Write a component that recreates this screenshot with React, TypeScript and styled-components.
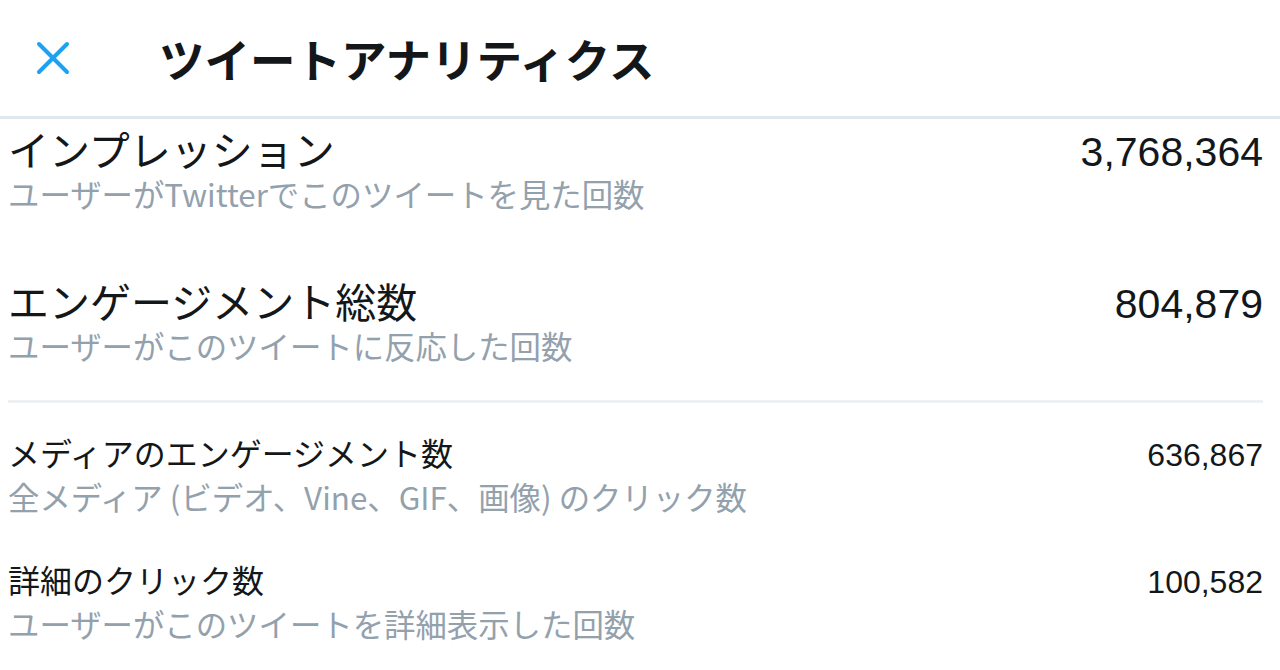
import React from "react";
import styled, { createGlobalStyle } from "styled-components";

const GlobalStyle = createGlobalStyle`
  html, body {
    margin: 0;
    padding: 0;
    background: #ffffff;
  }
  body {
    font-family: "Liberation Sans", "Noto Sans CJK JP", sans-serif;
    color: #14171a;
  }
`;

const Page = styled.div`
  width: 1280px;
  height: 670px;
  overflow: hidden;
  background: #ffffff;
`;

const Header = styled.header`
  display: flex;
  align-items: center;
  height: 116px;
  padding-left: 36px;
  gap: 89px;
  border-bottom: 3px solid #e1e8ed;
`;

const CloseButton = styled.button`
  display: flex;
  align-items: center;
  justify-content: center;
  width: 34px;
  height: 34px;
  padding: 0;
  border: none;
  background: transparent;
  cursor: pointer;
`;

const Title = styled.h1`
  margin: 0;
  font-family: "Noto Sans CJK JP", sans-serif;
  font-weight: 700;
  font-size: 45.5px;
  line-height: 52px;
  color: #14171a;
`;

const Body = styled.main`
  padding: 0 17px 0 8px;
`;

const Group = styled.section<{ $pt: number; $gap: number }>`
  display: flex;
  flex-direction: column;
  gap: ${(p) => p.$gap}px;
  padding-top: ${(p) => p.$pt}px;
`;

const Divider = styled.hr`
  margin: 33px 0 0 0;
  border: none;
  height: 3px;
  background: #eef1f4;
`;

const Metric = styled.div`
  display: grid;
  grid-template-columns: 1fr auto;
  align-items: baseline;
`;

const Label = styled.div<{ $big: boolean }>`
  font-family: "Noto Sans CJK JP", sans-serif;
  font-size: ${(p) => (p.$big ? 41 : 32)}px;
  line-height: 42px;
  color: #14171a;
  white-space: nowrap;
`;

const Value = styled.div<{ $big: boolean }>`
  font-family: "Liberation Sans", Arial, sans-serif;
  font-size: ${(p) => (p.$big ? 41 : 32)}px;
  line-height: 42px;
  color: #14171a;
  text-align: right;
`;

const Desc = styled.div`
  grid-column: 1 / 2;
  font-family: "Noto Sans CJK JP", sans-serif;
  font-size: 31.4px;
  line-height: 42px;
  color: #93a1ad;
  white-space: nowrap;
`;

type Item = { label: string; desc: string; value: string };

const primary: Item[] = [
  {
    label: "インプレッション",
    desc: "ユーザーがTwitterでこのツイートを見た回数",
    value: "3,768,364",
  },
  {
    label: "エンゲージメント総数",
    desc: "ユーザーがこのツイートに反応した回数",
    value: "804,879",
  },
];

const secondary: Item[] = [
  {
    label: "メディアのエンゲージメント数",
    desc: "全メディア (ビデオ、Vine、GIF、画像) のクリック数",
    value: "636,867",
  },
  {
    label: "詳細のクリック数",
    desc: "ユーザーがこのツイートを詳細表示した回数",
    value: "100,582",
  },
];

const CloseIcon = () => (
  <svg width="34" height="34" viewBox="0 0 34 34" aria-hidden="true">
    <path
      d="M3 3 L31 31 M31 3 L3 31"
      stroke="#1da1f2"
      strokeWidth="4"
      strokeLinecap="round"
      fill="none"
    />
  </svg>
);

const MetricRow = ({ item, big }: { item: Item; big: boolean }) => (
  <Metric>
    <Label $big={big}>{item.label}</Label>
    <Value $big={big}>{item.value}</Value>
    <Desc>{item.desc}</Desc>
  </Metric>
);

export default function App() {
  return (
    <Page>
      <GlobalStyle />
      <Header>
        <CloseButton aria-label="閉じる">
          <CloseIcon />
        </CloseButton>
        <Title>ツイートアナリティクス</Title>
      </Header>
      <Body>
        <Group $pt={8} $gap={64}>
          {primary.map((it) => (
            <MetricRow key={it.label} item={it} big />
          ))}
        </Group>
        <Divider />
        <Group $pt={28} $gap={40}>
          {secondary.map((it) => (
            <MetricRow key={it.label} item={it} big={false} />
          ))}
        </Group>
      </Body>
    </Page>
  );
}
